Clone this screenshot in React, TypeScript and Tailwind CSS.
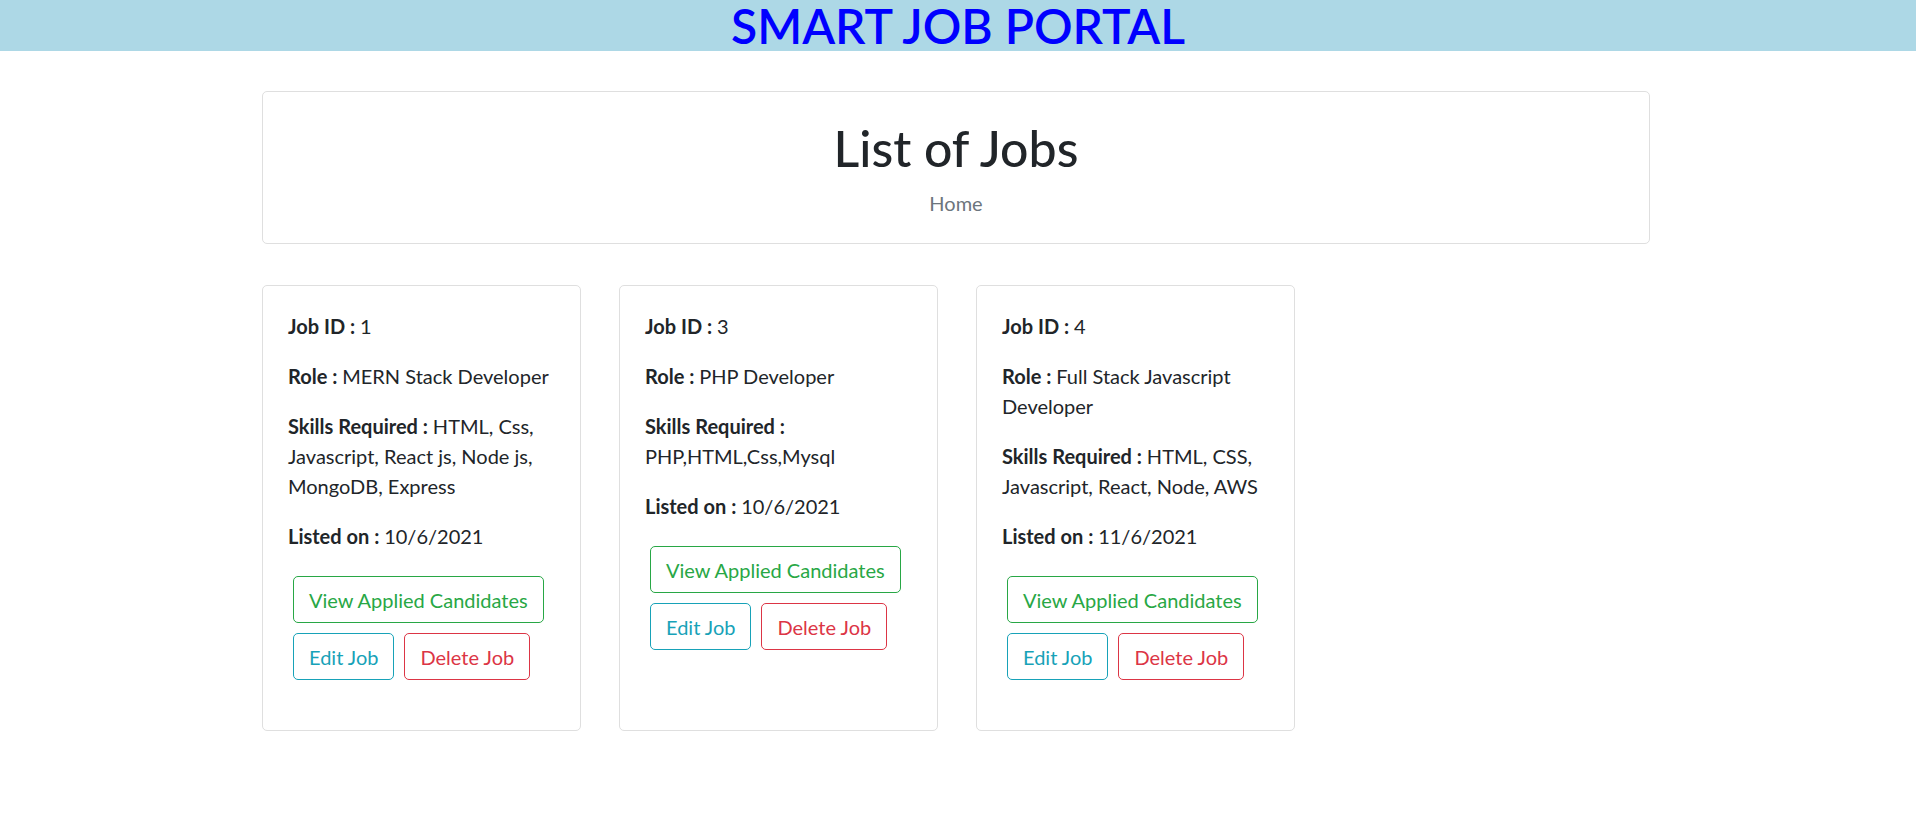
import React from 'react';

interface Job {
  id: number;
  role: string;
  skills: string;
  listedOn: string;
}

const jobs: Job[] = [
  {
    id: 1,
    role: 'MERN Stack Developer',
    skills: 'HTML, Css, Javascript, React js, Node js, MongoDB, Express',
    listedOn: '10/6/2021',
  },
  { id: 3, role: 'PHP Developer', skills: 'PHP,HTML,Css,Mysql', listedOn: '10/6/2021' },
  {
    id: 4,
    role: 'Full Stack Javascript Developer',
    skills: 'HTML, CSS, Javascript, React, Node, AWS',
    listedOn: '11/6/2021',
  },
];

const Field: React.FC<{ label: string; value: React.ReactNode }> = ({ label, value }) => (
  <p className="mb-[20px]">
    <b className="font-bold">{label} : </b>
    {value}
  </p>
);

const btn =
  'm-[5px] px-[15px] py-[7.5px] border rounded-[5px] bg-white text-[20px] leading-[30px] whitespace-nowrap cursor-pointer';

const JobCard: React.FC<{ job: Job }> = ({ job }) => (
  <div className="w-[319px] border border-[#dfdfdf] rounded-[5px] bg-white">
    <div className="p-[25px]">
      <Field label="Job ID" value={job.id} />
      <Field label="Role" value={job.role} />
      <Field label="Skills Required" value={job.skills} />
      <Field label="Listed on" value={job.listedOn} />
      <div className="mb-[20px]">
        <button className={`${btn} border-[#28a745] text-[#28a745]`}>View Applied Candidates</button>
        <div className="flex">
          <button className={`${btn} border-[#17a2b8] text-[#17a2b8]`}>Edit Job</button>
          <button className={`${btn} border-[#dc3545] text-[#dc3545]`}>Delete Job</button>
        </div>
      </div>
    </div>
  </div>
);

export default function App() {
  return (
    <div
      className="min-h-screen bg-white text-[#212529] text-[20px] leading-[30px]"
      style={{ fontFamily: 'Lato, "Open Sans", sans-serif' }}
    >
      <header className="h-[51px] bg-[#add8e6] flex justify-center items-center">
        <h1 className="text-[48px] leading-[51px] font-semibold text-[#0000ff]">SMART JOB PORTAL</h1>
      </header>

      <main className="w-[1392px] mx-auto pr-[4px] mt-[40px]">
        <div className="border border-[#dfdfdf] rounded-[5px] px-[25px] pt-[26px] pb-[25px] text-center">
          <h1 className="text-[50px] leading-[60px] font-medium mb-[10px]">List of Jobs</h1>
          <p className="text-[#6c757d]">Home</p>
        </div>

        <div className="flex items-stretch gap-[38px] mt-[41px]">
          {jobs.map((job) => (
            <JobCard key={job.id} job={job} />
          ))}
        </div>
      </main>
    </div>
  );
}
